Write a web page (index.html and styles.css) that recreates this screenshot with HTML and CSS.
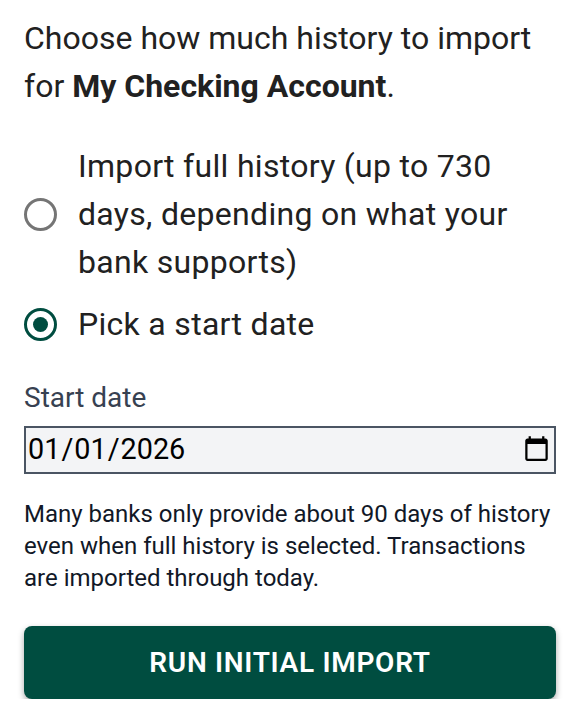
FILE: index.html
```html
<!DOCTYPE html>
<html lang="en">

<head>
    <meta charset="UTF-8">
    <meta name="viewport" content="width=device-width, initial-scale=1.0">
    <title>Initial import</title>
    <link rel="stylesheet" href="styles.css">
</head>

<body>
    <p class="intro">Choose how much history to import for <strong>My Checking Account</strong>.</p>

    <div class="options">
        <label class="option">
            <input type="radio" name="history">
            <span>Import full history (up to 730 days, depending on what your bank supports)</span>
        </label>
        <label class="option">
            <input type="radio" name="history" checked>
            <span>Pick a start date</span>
        </label>
    </div>

    <label class="date-label" for="start-date">Start date</label>
    <input class="date-input" id="start-date" type="date" value="2026-01-01">

    <p class="help">Many banks only provide about 90 days of history even when full history is selected. Transactions are imported through today.</p>

    <button class="submit">Run initial import</button>
</body>

</html>
```

FILE: styles.css
```css
body {
    margin: 0;
    padding: 14px 30px 0 24px;
    background: #fff;
    color: #212121;
    font-family: Roboto, sans-serif;
}

.intro {
    margin: 0;
    font-size: 32px;
    line-height: 48px;
}

.intro strong {
    font-weight: 700;
}

.options {
    display: flex;
    flex-direction: column;
    gap: 14px;
    margin-top: 32px;
}

.option {
    display: flex;
    align-items: center;
    gap: 21px;
    font-size: 32px;
    letter-spacing: 0.3px;
    line-height: 48px;
}

.option input {
    flex: none;
    box-sizing: border-box;
    width: 33px;
    height: 33px;
    margin: 0;
    padding: 6px;
    border: 3px solid #757575;
    border-radius: 50%;
    appearance: none;
    background: #fff;
}

.option input:checked {
    border-color: #004d40;
    background: #004d40 content-box;
}

.date-label {
    display: block;
    margin-top: 30px;
    color: #374151;
    font-size: 28px;
    line-height: 40px;
}

.date-input {
    display: block;
    box-sizing: border-box;
    width: 100%;
    height: 48px;
    margin-top: 8px;
    padding: 0 1px 2px 1px;
    border: 2px solid #4b5563;
    border-radius: 0;
    background: #f3f4f6;
    color: #000;
    font-family: Roboto, sans-serif;
    font-size: 28.8px;
}

.help {
    margin: 24px 0 0;
    color: #111827;
    font-size: 24px;
    line-height: 32px;
}

.submit {
    display: block;
    width: 100%;
    height: 73px;
    margin-top: 32px;
    border: 0;
    border-radius: 8px;
    background: #004d40;
    box-shadow: 0 3px 6px rgba(0, 0, 0, 0.35);
    color: #fff;
    font-family: Roboto, sans-serif;
    font-size: 28px;
    font-weight: 600;
    letter-spacing: 0.7px;
    text-transform: uppercase;
}
```
